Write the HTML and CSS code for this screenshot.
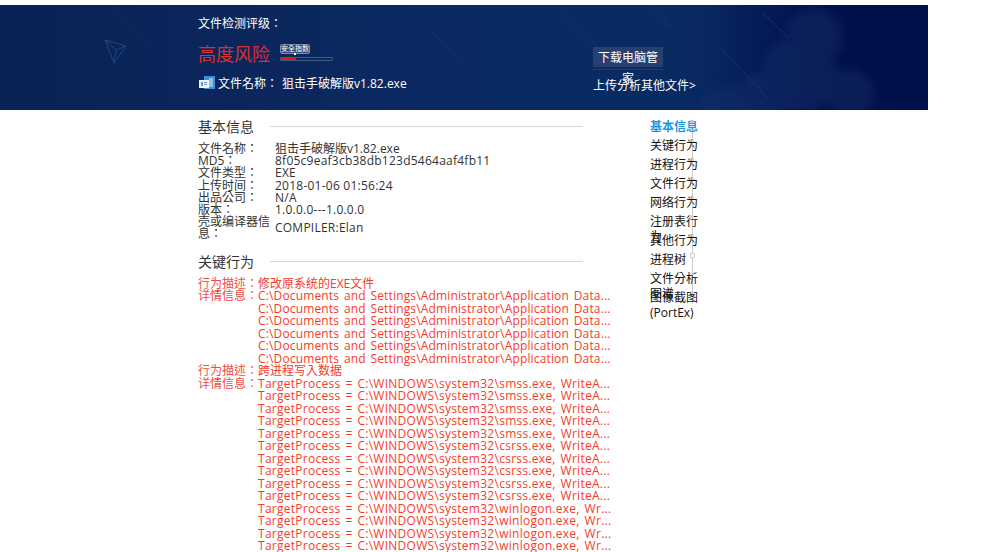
FILE: index.html
```html
<!DOCTYPE html>
<html lang="zh-TW">
<head>
<meta charset="utf-8">
<title>文件检测报告</title>
<link rel="stylesheet" href="styles.css">
</head>
<body>
<header class="banner">
  <svg class="banner-art" width="928" height="105" viewBox="0 0 928 105" aria-hidden="true">
    <defs>
      <filter id="soft"><feGaussianBlur stdDeviation="5"/></filter>
    </defs>
    <g fill="#15336a" opacity=".42" filter="url(#soft)">
      <circle cx="815" cy="32" r="28"/><circle cx="800" cy="70" r="38"/><circle cx="850" cy="88" r="24"/><circle cx="760" cy="95" r="26"/><circle cx="725" cy="104" r="22"/>
    </g>
    <g stroke="#1f4582" stroke-width="1" fill="none">
      <path d="M105 35 126 41 114 58Z"/><path d="M105 35 116 45 126 41M116 45 114 58"/>
      <path d="M112 2 152 42M205 85 218 96M430 25 458 53M566 10 600 45" opacity=".3"/>
      <path d="M648 0 674 25M762 7 789 33M722 45 768 93" opacity=".55"/>
    </g>
  </svg>
  <div class="banner-main">
    <div class="rating-label">文件检测评级：</div>
    <div class="risk-row">
      <span class="risk-text">高度风险</span>
      <div class="meter">
        <span class="meter-tip">安全指数</span>
        <div class="meter-track"><div class="meter-fill"></div></div>
      </div>
    </div>
    <div class="file-row">
      <svg class="file-icon" width="16" height="16" viewBox="0 0 16 16" aria-hidden="true">
        <rect x="5" y="1" width="11" height="13" fill="#3f8fd8"/>
        <rect x="10" y="3" width="4" height="9" fill="#8cc0ee"/>
        <rect x="0" y="5" width="10" height="8" fill="#eef3f8"/>
        <path d="M2 7h2v4H2zM5 7h3v1H5zM5 9h3v1H5z" fill="#6f8fb8"/>
      </svg>
      <span class="file-label">文件名称：</span>
      <span class="file-name">狙击手破解版v1.82.exe</span>
    </div>
  </div>
  <div class="banner-side">
    <a class="download-btn">下载电脑管家</a>
    <div class="upload-link">上传分析其他文件&gt;</div>
  </div>
</header>

<div class="page">
  <main class="report">
    <section class="basic">
      <div class="section-head"><h2>基本信息</h2><span class="rule"></span></div>
      <dl class="info">
        <div class="info-row"><dt>文件名称：</dt><dd class="plain">狙击手破解版v1.82.exe</dd></div>
        <div class="info-row"><dt>MD5：</dt><dd>8f05c9eaf3cb38db123d5464aaf4fb11</dd></div>
        <div class="info-row"><dt>文件类型：</dt><dd>EXE</dd></div>
        <div class="info-row"><dt>上传时间：</dt><dd>2018-01-06 01:56:24</dd></div>
        <div class="info-row"><dt>出品公司：</dt><dd>N/A</dd></div>
        <div class="info-row"><dt>版本：</dt><dd>1.0.0.0---1.0.0.0</dd></div>
        <div class="info-row center"><dt>壳或编译器信息：</dt><dd>COMPILER:Elan</dd></div>
      </dl>
    </section>
    <section class="key">
      <div class="section-head"><h2>关键行为</h2><span class="rule"></span></div>
      <dl class="behave">
        <div class="behave-row"><dt>行为描述：</dt><dd>修改原系统的EXE文件</dd></div>
        <div class="behave-row"><dt>详情信息：</dt><dd class="paths">
          <p>C:\Documents and Settings\Administrator\Application Data...</p>
          <p>C:\Documents and Settings\Administrator\Application Data...</p>
          <p>C:\Documents and Settings\Administrator\Application Data...</p>
          <p>C:\Documents and Settings\Administrator\Application Data...</p>
          <p>C:\Documents and Settings\Administrator\Application Data...</p>
          <p>C:\Documents and Settings\Administrator\Application Data...</p>
        </dd></div>
        <div class="behave-row"><dt>行为描述：</dt><dd>跨进程写入数据</dd></div>
        <div class="behave-row"><dt>详情信息：</dt><dd class="targets">
          <p>TargetProcess = C:\WINDOWS\system32\smss.exe, WriteA...</p>
          <p>TargetProcess = C:\WINDOWS\system32\smss.exe, WriteA...</p>
          <p>TargetProcess = C:\WINDOWS\system32\smss.exe, WriteA...</p>
          <p>TargetProcess = C:\WINDOWS\system32\smss.exe, WriteA...</p>
          <p>TargetProcess = C:\WINDOWS\system32\smss.exe, WriteA...</p>
          <p>TargetProcess = C:\WINDOWS\system32\csrss.exe, WriteA...</p>
          <p>TargetProcess = C:\WINDOWS\system32\csrss.exe, WriteA...</p>
          <p>TargetProcess = C:\WINDOWS\system32\csrss.exe, WriteA...</p>
          <p>TargetProcess = C:\WINDOWS\system32\csrss.exe, WriteA...</p>
          <p>TargetProcess = C:\WINDOWS\system32\csrss.exe, WriteA...</p>
          <p>TargetProcess = C:\WINDOWS\system32\winlogon.exe, Wr...</p>
          <p>TargetProcess = C:\WINDOWS\system32\winlogon.exe, Wr...</p>
          <p>TargetProcess = C:\WINDOWS\system32\winlogon.exe, Wr...</p>
          <p>TargetProcess = C:\WINDOWS\system32\winlogon.exe, Wr...</p>
        </dd></div>
      </dl>
    </section>
  </main>
  <nav class="side-nav">
    <a class="active">基本信息</a>
    <a>关键行为</a>
    <a>进程行为</a>
    <a>文件行为</a>
    <a>网络行为</a>
    <a>注册表行为</a>
    <a>其他行为</a>
    <a class="hollow">进程树</a>
    <a>文件分析图谱</a>
    <a>图像截图(PortEx)</a>
  </nav>
</div>
</body>
</html>
```
FILE: styles.css
```css
html, body {
  margin: 0;
  padding: 0;
  height: 552px;
  overflow: hidden;
  background: #fff;
}
body {
  padding-top: 5px;
  box-sizing: border-box;
  font-family: "Open Sans", "Noto Sans CJK TC", sans-serif;
  font-size: 12px;
  color: #333;
}
.banner {
  position: relative;
  width: 928px;
  height: 105px;
  box-sizing: border-box;
  padding-left: 198px;
  display: flex;
  color: #fff;
  overflow: hidden;
  background:
    linear-gradient(90deg, rgba(2,16,76,0) 0, rgba(2,16,76,0) 76%, #02104c 90%),
    linear-gradient(90deg, #0a2255 0, #0a2458 12%, #0b2a62 50%, #0a2a62 72%, #041a58 100%);
}
.banner-art {
  position: absolute;
  left: 0;
  top: 0;
}
.banner-main {
  position: relative;
  width: 395px;
  padding-top: 10px;
}
.rating-label {
  line-height: 17px;
  height: 17px;
}
.risk-row {
  display: flex;
  height: 34px;
  margin-top: 6px;
  align-items: flex-start;
}
.risk-text {
  font-size: 18px;
  line-height: 32px;
  color: #e02d2d;
  width: 82px;
}
.meter {
  position: relative;
  width: 53px;
  padding-top: 19px;
}
.meter-tip {
  position: absolute;
  left: 0;
  top: 6px;
  width: 30px;
  height: 10px;
  box-sizing: border-box;
  border: 1px solid #7f8fab;
  border-radius: 2px;
  background: #2c4570;
  font-size: 7px;
  line-height: 8px;
  text-align: center;
  white-space: nowrap;
}
.meter-tip::after {
  content: "";
  position: absolute;
  left: 13px;
  top: 8px;
  width: 2px;
  height: 2px;
  background: #fff;
}
.meter-track {
  border: 1px solid #43597f;
  border-radius: 1px;
  width: 51px;
  height: 2px;
}
.meter-fill {
  width: 15px;
  height: 2px;
  background: #e3170f;
}
.file-row {
  display: flex;
  align-items: center;
  height: 17px;
  margin-top: 2px;
  padding-left: 1px;
}
.file-icon {
  width: 16px;
  margin-right: 3px;
}
.file-label {
  width: 64px;
}
.banner-side {
  position: relative;
  width: 110px;
  padding-top: 42px;
}
.download-btn {
  display: block;
  width: 70px;
  height: 20px;
  box-sizing: border-box;
  padding: 0 5px;
  background: #28406f;
  line-height: 21px;
  text-align: center;
  box-shadow: 0 2px 0 0 #0b2a62, 0 3px 0 0 #1d3f77;
}
.upload-link {
  margin-top: 10px;
  line-height: 17px;
  white-space: nowrap;
}
.page {
  display: flex;
  padding-left: 198px;
}
.report {
  width: 385px;
  padding-top: 8px;
}
.section-head {
  display: flex;
  align-items: center;
  height: 17px;
  gap: 16px;
}
.section-head h2 {
  margin: 0;
  font-size: 14px;
  font-weight: 400;
  line-height: 17px;
  color: #333;
}
.rule {
  flex: 1;
  height: 1px;
  background: #d8d8d8;
}
.info {
  margin: 8px 0 0;
}
.info-row {
  display: flex;
  line-height: 12.2px;
}
.info-row.center {
  align-items: center;
}
.info-row dt {
  width: 72px;
  margin-right: 5px;
}
.info-row dd {
  margin: 0;
  letter-spacing: .24px;
}
.info-row dd.plain {
  letter-spacing: 0;
}
.key {
  margin-top: 12px;
}
.behave {
  margin: 8px 0 0;
  color: #f73b2b;
  width: 420px;
}
.behave-row {
  display: flex;
  line-height: 12.5px;
}
.behave-row dt {
  width: 60px;
  color: #f54a44;
}
.behave-row dd {
  margin: 0;
  white-space: nowrap;
}
.behave-row p {
  margin: 0;
  word-spacing: 1.5px;
}
.paths p {
  letter-spacing: .15px;
}
.targets p {
  letter-spacing: .27px;
}
.side-nav {
  position: relative;
  width: 48px;
  margin-left: 67px;
  padding-top: 9px;
  background: linear-gradient(#ccc, #ccc) 42px 14px / 1px 180px no-repeat;
  align-self: flex-start;
}
.side-nav a {
  position: relative;
  display: block;
  height: 19px;
  line-height: 15px;
  color: #111;
}
.side-nav a::after {
  content: "";
  position: absolute;
  left: 41px;
  top: 1px;
  width: 3px;
  height: 3px;
  border-radius: 50%;
  background: #ccc;
}
.side-nav .hollow::after {
  left: 40px;
  top: 1px;
  width: 3px;
  height: 3px;
  border: 1px solid #ccc;
  border-radius: 1px;
  background: #fff;
}
.side-nav .active {
  color: #1e96e6;
  font-weight: 600;
}
```
